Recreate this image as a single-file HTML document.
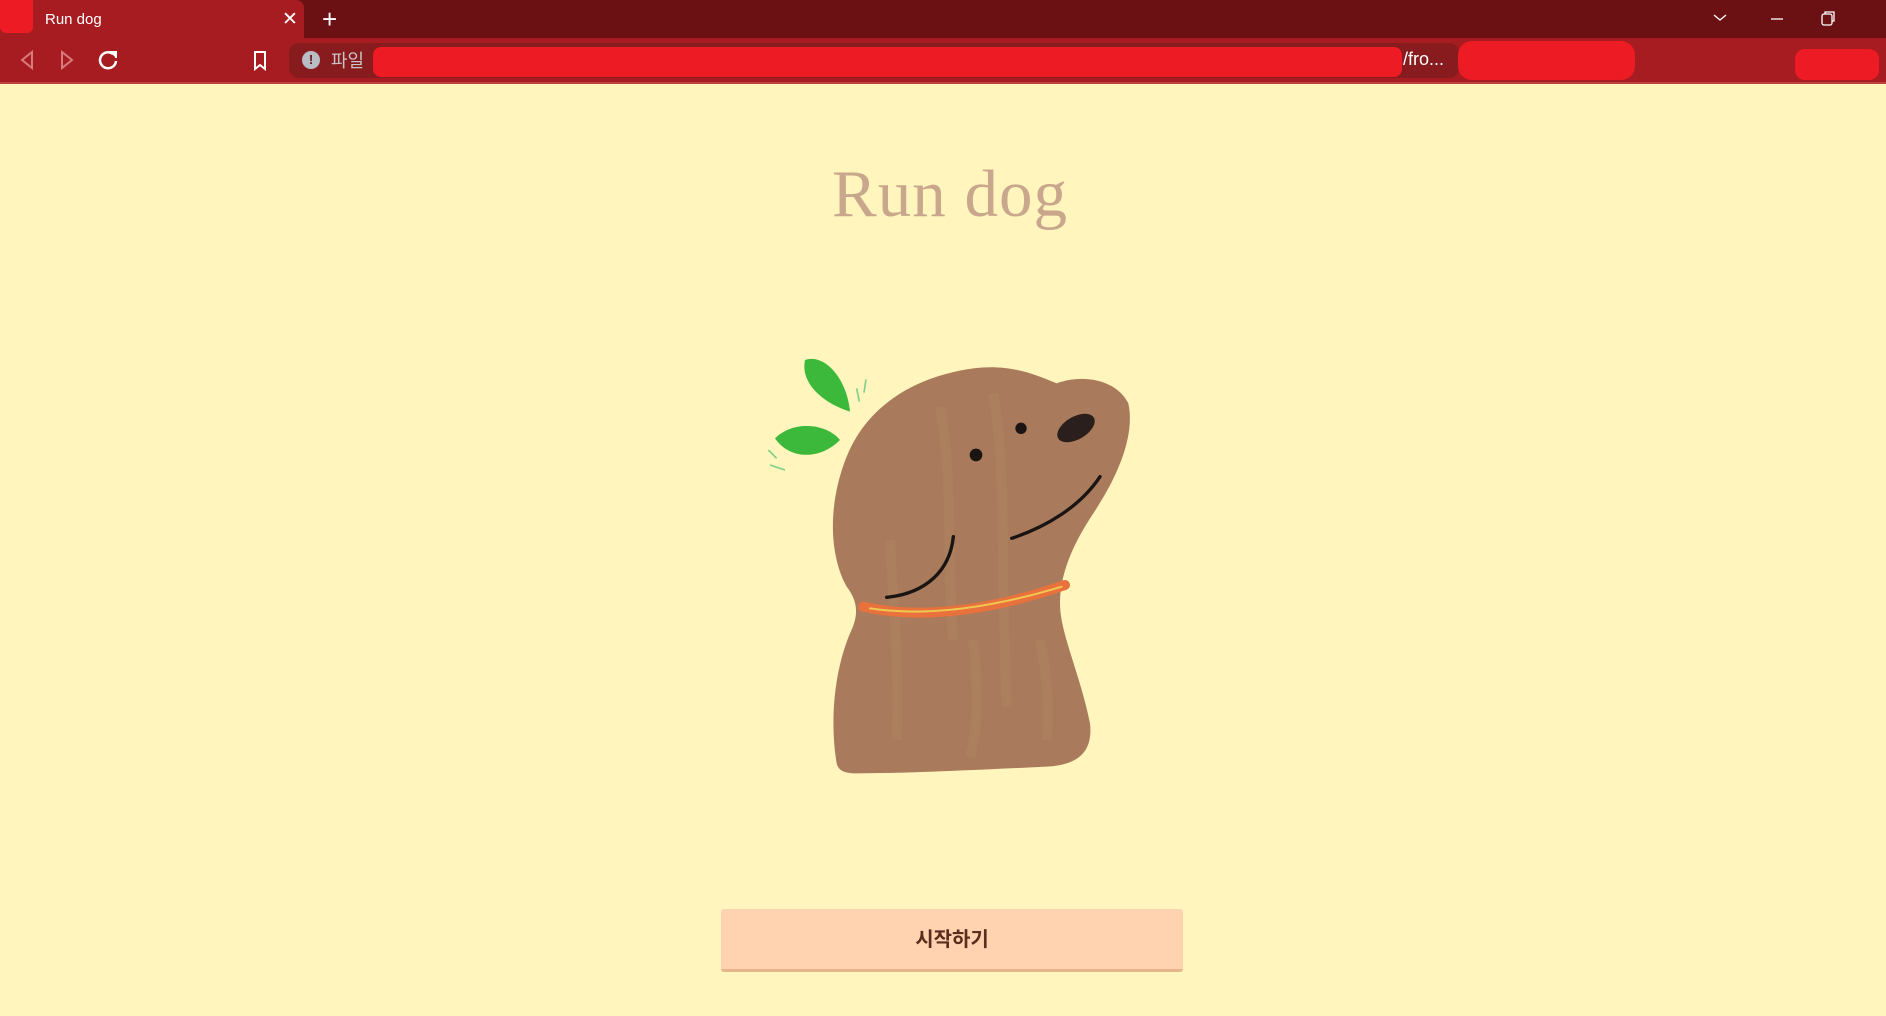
<!DOCTYPE html>
<html><head><meta charset="utf-8"><style>
*{margin:0;padding:0;box-sizing:border-box}
body{width:1886px;height:1016px;overflow:hidden;background:#fff5bd;font-family:"Liberation Sans","Noto Sans CJK KR",sans-serif;position:relative}
.abs{position:absolute}
</style></head><body>
<div class="abs" style="left:0;top:0;width:1886px;height:38px;background:#6b1114"></div>
<div class="abs" style="left:0;top:0;width:304px;height:40px;background:#a61c20;border-radius:0 8px 0 0"></div>
<div class="abs" style="left:0;top:0;width:33px;height:33px;background:#ed1c24;border-radius:0 0 6px 6px"></div>
<div class="abs" style="left:45px;top:11px;color:#fff;font-size:15px">Run dog</div>
<div class="abs" style="left:282px;top:8px;color:#fff;font-size:19px">✕</div>
<div class="abs" style="left:322px;top:4px;color:#fff;font-size:26px;font-weight:300">+</div>
<svg class="abs" style="left:1700px;top:0" width="186" height="38"><g stroke="#fff" fill="none" stroke-width="1.3"><path d="M14 15l6 5 6-5"/><path d="M71 19h12"/><rect x="122" y="14" width="10" height="11" rx="2"/><path d="M125 14v-2h9v9h-2"/></g></svg>
<div class="abs" style="left:0;top:38px;width:1886px;height:45px;background:#a61c20"></div>
<svg class="abs" style="left:0;top:38px" width="300" height="45"><g fill="none" stroke-width="2"><path d="M32 14l-10 8 10 8z" stroke="#d97a7a"/><path d="M62 14l10 8-10 8z" stroke="#d97a7a"/><path d="M113 16a8 8 0 1 0 3 7" stroke="#fff" stroke-width="2.5"/><path d="M110 14h6v6" stroke="#fff" fill="#fff"/><path d="M255 14h10v17l-5-4-5 4z" stroke="#fff"/></g></svg>
<div class="abs" style="left:289px;top:43px;width:1170px;height:35px;background:#871b1d;border-radius:10px"></div>
<div class="abs" style="left:302px;top:51px;width:18px;height:18px;border-radius:50%;background:#b8bcc4;color:#6b1114;font-weight:bold;font-size:13px;text-align:center;line-height:18px">!</div>
<div class="abs" style="left:331px;top:47px;color:#c9c3c6;font-size:18px">파일</div>
<div class="abs" style="left:373px;top:47px;width:1029px;height:30px;background:#ed1c24;border-radius:8px"></div>
<div class="abs" style="left:1403px;top:49px;color:#fff;font-size:18px">/fro...</div>
<div class="abs" style="left:1458px;top:41px;width:177px;height:39px;background:#ed1c24;border-radius:14px"></div>
<div class="abs" style="left:1795px;top:49px;width:84px;height:31px;background:#ed1c24;border-radius:10px"></div>
<div class="abs" style="left:0;top:82px;width:1886px;height:2px;background:#c04040"></div>

<div class="abs" style="left:0;top:156px;width:1900px;text-align:center;font-family:'Liberation Serif',serif;font-size:67px;color:#c9a78c;letter-spacing:1px">Run dog</div>

<svg class="abs" style="left:740px;top:340px" width="420" height="450" viewBox="0 0 1260 1350">
<path d="M290 1270C270 1150 280 1000 330 880C360 820 350 780 320 740C270 650 260 500 320 350C380 200 520 110 700 85C820 70 900 110 950 130C1030 100 1130 120 1165 190C1185 280 1140 400 1060 520C1000 610 960 700 960 790C960 880 1020 1000 1050 1150C1060 1240 1010 1275 920 1280C700 1290 500 1300 350 1300C310 1300 295 1290 290 1270Z" fill="#a97b5c"/>
<path d="M600 200C640 400 620 700 640 900M760 160C800 400 780 600 800 1100M450 600C460 800 480 1000 470 1200M900 900C920 1000 930 1100 920 1200M700 900C710 1000 720 1150 690 1250" stroke="#b88a62" stroke-width="30" fill="none" opacity=".25"/>
<circle cx="708" cy="345" r="19" fill="#1a1412"/><circle cx="843" cy="265" r="17" fill="#1a1412"/>
<ellipse cx="1008" cy="264" rx="62" ry="34" transform="rotate(-30 1008 264)" fill="#2a1f1c"/>
<path d="M815 595C920 560 1020 500 1080 410" stroke="#1a1412" stroke-width="10" fill="none" stroke-linecap="round"/>
<path d="M640 590C630 690 560 760 440 772" stroke="#1a1412" stroke-width="10" fill="none" stroke-linecap="round"/>
<path d="M370 800C500 830 700 830 975 735" stroke="#e8713c" stroke-width="30" fill="none" stroke-linecap="round"/>
<path d="M390 805C520 825 700 820 965 740" stroke="#f0c850" stroke-width="6" fill="none" stroke-linecap="round"/>
<path d="M195 60C250 40 320 110 330 215C250 190 180 130 195 60Z" fill="#3cb83a"/>
<path d="M105 295C160 240 260 250 300 300C240 360 150 360 105 295Z" fill="#3cb83a"/>
<path d="M350 145l8 40M378 118l-6 40M85 330l25 25M90 375l45 15" stroke="#7fd08a" stroke-width="5" fill="none"/>
</svg>

<div class="abs" style="left:721px;top:909px;width:462px;height:63px;background:#ffd3b0;border-bottom:3px solid #e8b48a;border-radius:3px;text-align:center;line-height:62px;font-size:20px;font-weight:bold;color:#5a2e1e">시작하기</div>
</body></html>
